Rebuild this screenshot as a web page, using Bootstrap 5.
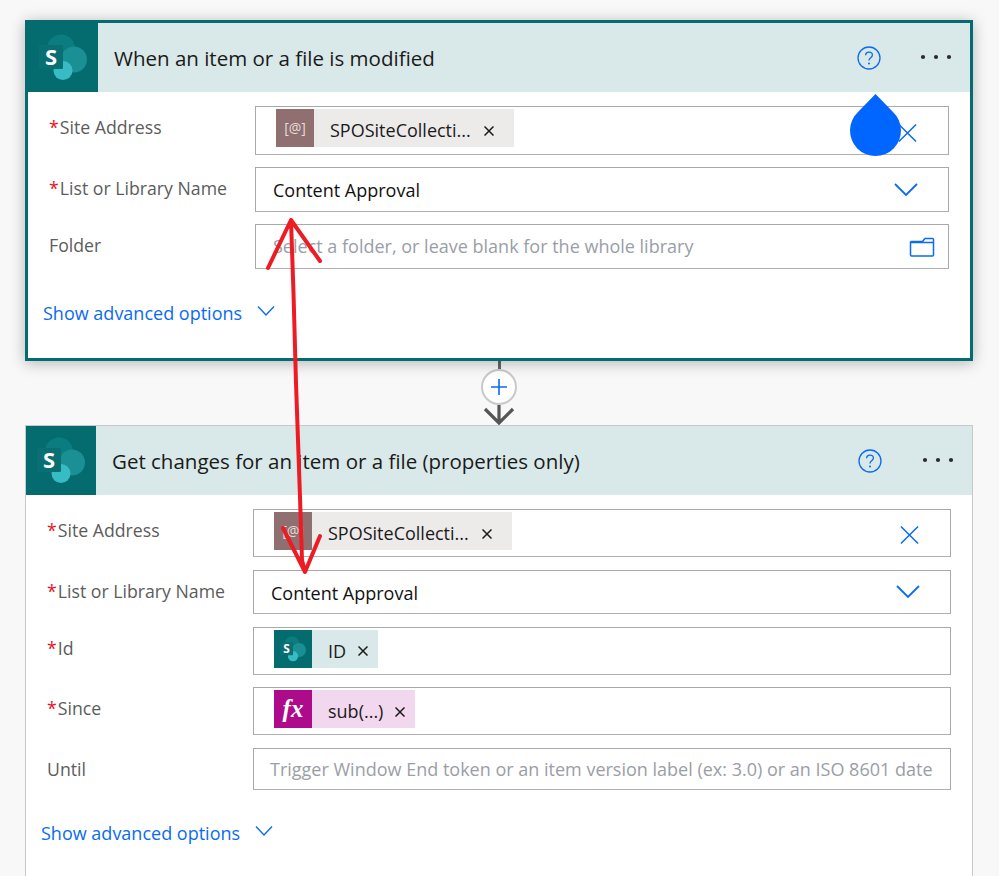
<!DOCTYPE html>
<html lang="en">
  <head>
    <meta charset="UTF-8" />
    <meta name="viewport" content="width=device-width, initial-scale=1.0" />
    <title>Flow editor</title>
    <link href="https://cdn.jsdelivr.net/npm/bootstrap@5.3.0/dist/css/bootstrap.min.css" rel="stylesheet" />
    <style>
      html, body { height: 876px; overflow: hidden; }
      body { background: #f8f8f8; font-family: "Open Sans", "Liberation Sans", sans-serif; font-size: 18px; }
      .flow-page { position: relative; width: 999px; height: 876px; padding: 20px 26px 0 25px; overflow: hidden; }
      .flow-card { border-radius: 0; background: #fff; }
      .flow-card.is-active { border: 3px solid #046c70; height: 341px; box-shadow: 0 2px 14px rgba(0,0,0,.28); }
      .flow-card.is-idle { border: 1px solid #c6c9c9; border-bottom: 0; height: 520px; }
      .flow-head { height: 69px; background: #d9e8e8; border: 0; border-radius: 0 !important; padding: 0; }
      .flow-logo { width: 70px; height: 69px; background: #046c6e; flex: none; }
      .flow-logo svg { width: 70px; height: 69px; display: block; }
      .flow-title { font-size: 20.5px; color: #1a1a1a; margin-left: 16px; padding-top: 2px; }
      .head-help { position: absolute; top: 23px; right: 90px; }
      .is-active .head-help { right: 89px; }
      .head-dots { position: absolute; top: 31px; right: 18px; }
      .flow-body { padding: 14px 21px 0 21px; }
      .field-row { display: flex; margin-bottom: 12px; }
      .is-idle .field-row { margin-bottom: 12.8px; }
      .field-label { width: 206px; flex: none; padding-top: 9px; color: #5c5c5c; font-size: 17.7px; line-height: 24px; white-space: nowrap; }
      .field-label i { color: #e81123; font-style: normal; margin-right: 1px; }
      .field-box { flex: 1; position: relative; border: 1px solid #a9a9a9; border-bottom-color: #b0b0b0; border-radius: 0; padding: 0 17px; color: #111; line-height: 45px; height: 45px; background: #fff; font-size: 18px; }
      .is-idle .field-box { height: 44px; line-height: 44px; }
      .field-box.has-chip { display: flex; align-items: flex-start; height: 49px; padding: 2px 0 0 20px; }
      .is-idle .field-box.has-chip { height: 48px; }
      input.field-box::placeholder { color: #9a9ea6; opacity: 1; }
      .is-idle .field-box.is-until { height: 42px; padding: 0 16px; }
      .field-box:focus { border-color: #a9a9a9; box-shadow: none; }
      .token { display: flex; height: 38px; line-height: 38px; background: #edeaea; color: #1a1a1a; }
      .token.is-sp { background: #d9e8e8; }
      .token.is-fx { background: #f2d8ee; }
      .token-icon { width: 38px; height: 38px; margin-right: 1px; background: #8f6f6f; color: #e6dcdc; text-align: center; font-size: 14px; flex: none; }
      .token-icon svg { width: 38px; height: 38px; display: block; }
      .token.is-sp .token-icon { background: #046c6e; }
      .token.is-fx .token-icon { background: #ad0a8c; color: #fff; font-family: "Liberation Serif", serif; font-style: italic; font-size: 25px; font-weight: 700; }
      .token-text { padding: 2px 0 0 15px; }
      .token-x { padding: 5px 10px 0 12px; display: flex; align-items: center; }
      .token-x.is-wide { padding: 5px 20px 0 13px; }
      .field-end { position: absolute; top: 50%; transform: translateY(-50%); right: 30px; display: block; }
      .has-chip .field-end { top: 55%; right: 31px; }
      .adv-row { display: flex; align-items: center; color: #0a6cf0; margin: 32px 0 0 -6px; line-height: 24px; }
      .is-idle .adv-row { margin-top: 31px; }
      .adv-row svg { margin-left: 15px; margin-top: -4px; }
      .flow-joint { height: 64px; display: flex; flex-direction: column; align-items: center; }
      .joint-line { width: 3px; height: 8px; background: #666; }
      .joint-plus { width: 36px; height: 36px; border-radius: 50%; border: 2px solid #c9c9c9; background: #fff; display: flex; align-items: center; justify-content: center; }
      .joint-arrow { display: block; }
      .sketch-layer { position: absolute; left: 0; top: 0; pointer-events: none; }
    </style>
  </head>
  <body>
    <svg width="0" height="0" class="d-block position-absolute">
      <symbol id="sp-art" viewBox="0 0 70 69">
        <circle cx="33" cy="25.500" r="14" fill="#0b7c80" />
        <circle cx="46" cy="36.500" r="13" fill="#1a8f94" />
        <circle cx="35" cy="47.500" r="9.500" fill="#37bcc6" />
        <rect x="11" y="22" width="24" height="24" rx="1.500" fill="#0a6f73" />
      </symbol>
      <symbol id="help-icon" viewBox="0 0 24 24">
        <circle cx="12" cy="12" r="11" fill="none" stroke="#0a6cf0" stroke-width="1.300" />
        <path d="M8.600 9.300c0-2 1.500-3.200 3.400-3.200s3.400 1.200 3.400 3c0 2.700-3.400 2.700-3.400 5.400" fill="none" stroke="#0a6cf0" stroke-width="1.300" />
        <circle cx="12" cy="17.500" r="1" fill="#0a6cf0" />
      </symbol>
      <symbol id="dots-icon" viewBox="0 0 32 6">
        <circle cx="3" cy="3" r="2.100" fill="#2b2b2b" /><circle cx="16" cy="3" r="2.100" fill="#2b2b2b" /><circle cx="29" cy="3" r="2.100" fill="#2b2b2b" />
      </symbol>
      <symbol id="close-icon" viewBox="0 0 20 20">
        <path d="M1 1l18 18M19 1L1 19" stroke="#0a6cf0" stroke-width="1.600" fill="none" />
      </symbol>
      <symbol id="chip-x" viewBox="0 0 10 10">
        <path d="M.5.500l9 9M9.500.500l-9 9" stroke="#1a1a1a" stroke-width="1.500" fill="none" />
      </symbol>
      <symbol id="chev-icon" viewBox="0 0 24 14">
        <path d="M1 1l11 11L23 1" stroke="#0a6cf0" stroke-width="1.800" fill="none" />
      </symbol>
    </svg>

    <div class="flow-page">
      <div class="card flow-card is-active position-relative">
        <div class="card-header flow-head d-flex align-items-center">
          <div class="flow-logo"><svg viewBox="0 0 70 69"><use href="#sp-art" /><text x="23" y="41.500" text-anchor="middle" fill="#fff" font-family="Open Sans, sans-serif" font-weight="700" font-size="22">S</text></svg></div>
          <div class="flow-title">When an item or a file is modified</div>
          <svg class="head-help" width="24" height="24"><use href="#help-icon" /></svg>
          <svg class="head-dots" width="32" height="6"><use href="#dots-icon" /></svg>
        </div>
        <div class="flow-body">
          <div class="field-row">
            <div class="field-label"><i>*</i>Site Address</div>
            <div class="field-box has-chip">
              <span class="token"><span class="token-icon">[@]</span><span class="token-text">SPOSiteCollecti...</span><span class="token-x is-wide"><svg width="10" height="10"><use href="#chip-x" /></svg></span></span>
              <svg class="field-end" width="19" height="19"><use href="#close-icon" /></svg>
            </div>
          </div>
          <div class="field-row">
            <div class="field-label"><i>*</i>List or Library Name</div>
            <div class="field-box">Content Approval<svg class="field-end" width="24" height="14"><use href="#chev-icon" /></svg></div>
          </div>
          <div class="field-row">
            <div class="field-label">Folder</div>
            <div class="position-relative flex-grow-1 d-flex">
              <input class="form-control field-box" placeholder="Select a folder, or leave blank for the whole library" />
              <svg class="field-end" style="right:14px" width="26" height="20" viewBox="0 0 26 20"><path d="M1.500 5.500h23v12.500a1 1 0 0 1-1 1H2.500a1 1 0 0 1-1-1zM1.500 5.500a1 1 0 0 1 1-1h11l2-2.500a1 1 0 0 1 .8-.5h7.200a1 1 0 0 1 1 1v3" fill="none" stroke="#0a6cf0" stroke-width="1.500" /></svg>
            </div>
          </div>
          <div class="adv-row">Show advanced options<svg width="18" height="12" viewBox="0 0 18 12"><path d="M1 1.500l8 8.500 8-8.500" stroke="#0a6cf0" stroke-width="1.400" fill="none" /></svg></div>
        </div>
      </div>

      <div class="flow-joint">
        <div class="joint-line"></div>
        <div class="joint-plus"><svg width="18" height="18" viewBox="0 0 18 18"><path d="M9 1v16M1 9h16" stroke="#0a6cf0" stroke-width="1.600" /></svg></div>
        <svg class="joint-arrow" width="32" height="20" viewBox="0 0 32 20"><path d="M16 0v17M2 4l14 14L30 4" stroke="#555" stroke-width="3.200" fill="none" /></svg>
      </div>

      <div class="card flow-card is-idle position-relative">
        <div class="card-header flow-head d-flex align-items-center">
          <div class="flow-logo"><svg viewBox="0 0 70 69"><use href="#sp-art" /><text x="23" y="41.500" text-anchor="middle" fill="#fff" font-family="Open Sans, sans-serif" font-weight="700" font-size="22">S</text></svg></div>
          <div class="flow-title">Get changes for an item or a file (properties only)</div>
          <svg class="head-help" width="24" height="24"><use href="#help-icon" /></svg>
          <svg class="head-dots" width="32" height="6"><use href="#dots-icon" /></svg>
        </div>
        <div class="flow-body">
          <div class="field-row">
            <div class="field-label"><i>*</i>Site Address</div>
            <div class="field-box has-chip">
              <span class="token"><span class="token-icon">[@]</span><span class="token-text">SPOSiteCollecti...</span><span class="token-x is-wide"><svg width="10" height="10"><use href="#chip-x" /></svg></span></span>
              <svg class="field-end" width="19" height="19"><use href="#close-icon" /></svg>
            </div>
          </div>
          <div class="field-row">
            <div class="field-label"><i>*</i>List or Library Name</div>
            <div class="field-box">Content Approval<svg class="field-end" width="24" height="14"><use href="#chev-icon" /></svg></div>
          </div>
          <div class="field-row">
            <div class="field-label"><i>*</i>Id</div>
            <div class="field-box has-chip">
              <span class="token is-sp"><span class="token-icon"><svg viewBox="0 0 70 69"><use href="#sp-art" /><text x="23" y="41.500" text-anchor="middle" fill="#fff" font-family="Open Sans, sans-serif" font-weight="700" font-size="22">S</text></svg></span><span class="token-text">ID</span><span class="token-x"><svg width="10" height="10"><use href="#chip-x" /></svg></span></span>
            </div>
          </div>
          <div class="field-row">
            <div class="field-label"><i>*</i>Since</div>
            <div class="field-box has-chip">
              <span class="token is-fx"><span class="token-icon">fx</span><span class="token-text">sub(...)</span><span class="token-x"><svg width="10" height="10"><use href="#chip-x" /></svg></span></span>
            </div>
          </div>
          <div class="field-row">
            <div class="field-label">Until</div>
            <input class="form-control field-box is-until" placeholder="Trigger Window End token or an item version label (ex: 3.0) or an ISO 8601 date" />
          </div>
          <div class="adv-row">Show advanced options<svg width="18" height="12" viewBox="0 0 18 12"><path d="M1 1.500l8 8.500 8-8.500" stroke="#0a6cf0" stroke-width="1.400" fill="none" /></svg></div>
        </div>
      </div>

      <!-- hand drawn marks on top of the screenshot -->
      <svg class="sketch-layer" width="999" height="876" viewBox="0 0 999 876">
        <path d="M875.500 94L893 112A25.500 25.500 0 1 1 858 112Z" fill="#0066ff" />
        <path d="M268 268L291 220L320 261M291 220L293.500 293L296 383L300 497L302 560L305 572M283 528L305 572L320 536" fill="none" stroke="#ed1c24" stroke-width="4" stroke-linecap="round" stroke-linejoin="round" />
      </svg>
    </div>

    <script src="https://cdn.jsdelivr.net/npm/bootstrap@5.3.0/dist/js/bootstrap.bundle.min.js"></script>
  </body>
</html>
